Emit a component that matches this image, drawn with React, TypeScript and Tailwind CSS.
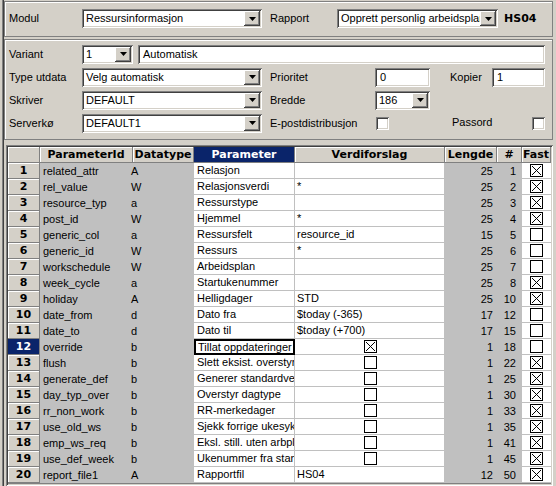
import React from "react";

const sunken =
  "shadow-[inset_1px_1px_0_#808080,inset_-1px_-1px_0_#ffffff,inset_2px_2px_0_#404040,inset_-2px_-2px_0_#d4d0c8]";
const raised =
  "shadow-[inset_-1px_-1px_0_#404040,inset_1px_1px_0_#ffffff,inset_-2px_-2px_0_#808080,inset_2px_2px_0_#d4d0c8]";

type Row = {
  n: number;
  id: string;
  type: string;
  param: string;
  value: string | boolean;
  len: number;
  pos: number;
  fast: boolean;
};

const rows: Row[] = [
  { n: 1, id: "related_attr", type: "A", param: "Relasjon", value: "", len: 25, pos: 1, fast: true },
  { n: 2, id: "rel_value", type: "W", param: "Relasjonsverdi", value: "*", len: 25, pos: 2, fast: true },
  { n: 3, id: "resource_typ", type: "a", param: "Ressurstype", value: "", len: 25, pos: 3, fast: true },
  { n: 4, id: "post_id", type: "W", param: "Hjemmel", value: "*", len: 25, pos: 4, fast: true },
  { n: 5, id: "generic_col", type: "a", param: "Ressursfelt", value: "resource_id", len: 15, pos: 5, fast: false },
  { n: 6, id: "generic_id", type: "W", param: "Ressurs", value: "*", len: 25, pos: 6, fast: false },
  { n: 7, id: "workschedule", type: "W", param: "Arbeidsplan", value: "", len: 25, pos: 7, fast: false },
  { n: 8, id: "week_cycle", type: "a", param: "Startukenummer", value: "", len: 25, pos: 8, fast: true },
  { n: 9, id: "holiday", type: "A", param: "Helligdager", value: "STD", len: 25, pos: 10, fast: true },
  { n: 10, id: "date_from", type: "d", param: "Dato fra", value: "$today (-365)", len: 17, pos: 12, fast: false },
  { n: 11, id: "date_to", type: "d", param: "Dato til", value: "$today (+700)", len: 17, pos: 15, fast: false },
  { n: 12, id: "override", type: "b", param: "Tillat oppdateringer", value: true, len: 1, pos: 18, fast: false },
  { n: 13, id: "flush", type: "b", param: "Slett eksist. overstyring", value: false, len: 1, pos: 22, fast: true },
  { n: 14, id: "generate_def", type: "b", param: "Generer standardverdier", value: false, len: 1, pos: 25, fast: true },
  { n: 15, id: "day_typ_over", type: "b", param: "Overstyr dagtype", value: false, len: 1, pos: 30, fast: true },
  { n: 16, id: "rr_non_work", type: "b", param: "RR-merkedager", value: false, len: 1, pos: 33, fast: true },
  { n: 17, id: "use_old_ws", type: "b", param: "Sjekk forrige ukesyklus", value: false, len: 1, pos: 35, fast: true },
  { n: 18, id: "emp_ws_req", type: "b", param: "Eksl. still. uten arbplan", value: false, len: 1, pos: 41, fast: true },
  { n: 19, id: "use_def_week", type: "b", param: "Ukenummer fra standard", value: false, len: 1, pos: 45, fast: true },
  { n: 20, id: "report_file1", type: "A", param: "Rapportfil", value: "HS04", len: 12, pos: 50, fast: true },
];

const Arrow = () => (
  <div className={`w-[16px] h-[15px] mr-[2px] bg-[#d4d0c8] flex items-center justify-center ${raised}`}>
    <svg width="7" height="4" viewBox="0 0 7 4">
      <polygon points="0,0 7,0 3.5,4" fill="#000" />
    </svg>
  </div>
);

const Combo = ({ w, value }: { w: string; value: string }) => (
  <div className={`${w} h-[19px] bg-white flex items-center ${sunken}`}>
    <span className="flex-1 pl-[4px] whitespace-nowrap overflow-hidden">{value}</span>
    <Arrow />
  </div>
);

const Input = ({ w, value }: { w: string; value: string }) => (
  <div className={`${w} h-[19px] bg-white flex items-center pl-[5px] ${sunken}`}>{value}</div>
);

const FormCheck = () => <div className={`w-[13px] h-[13px] bg-white ${sunken}`} />;

const GridCheck = ({ on }: { on: boolean }) => (
  <svg width="13" height="13" viewBox="0 0 13 13" className="block">
    <rect x="0.5" y="0.5" width="12" height="12" fill="#fff" stroke="#000" />
    {on && <path d="M2 2 L11 11 M11 2 L2 11" stroke="#000" strokeWidth="1" />}
  </svg>
);

const headCell =
  "h-[16px] flex items-center justify-center font-['DejaVu_Sans'] font-bold text-[11px] border-r border-b border-[#808080] shadow-[inset_1px_1px_0_#ffffff]";

export default function App() {
  return (
    <div className="w-[556px] h-[486px] overflow-hidden bg-[#d4d0c8] flex font-['Liberation_Sans'] text-[11px] text-black leading-none">
      <div className="w-[2px]" />
      <div className="w-[2px] border-l border-[#808080] border-r border-r-[#404040]" />
      <div className="flex-1 flex flex-col pr-[3px]">
        {/* Modul / Rapport */}
        <div className="h-[36px] mt-[1px] border border-[#808080] shadow-[inset_1px_1px_0_#ffffff] flex items-center pl-[4px]">
          <span className="w-[73px]">Modul</span>
          <Combo w="w-[180px]" value="Ressursinformasjon" />
          <span className="w-[67px] ml-[8px]">Rapport</span>
          <Combo w="w-[161px]" value="Opprett personlig arbeidsplan" />
          <span className="ml-[6px] font-['DejaVu_Sans'] font-bold">HS04</span>
        </div>

        {/* Variant panel */}
        <div className="h-[102px] mt-[2px] border border-[#808080] shadow-[inset_1px_1px_0_#ffffff] flex flex-col gap-[4px] pt-[5px] pl-[4px]">
          <div className="flex items-center">
            <span className="w-[73px]">Variant</span>
            <Combo w="w-[51px]" value="1" />
            <Input w="w-[407px] ml-[5px]" value="Automatisk" />
          </div>
          <div className="flex items-center">
            <span className="w-[73px]">Type utdata</span>
            <Combo w="w-[180px]" value="Velg automatisk" />
            <span className="w-[105px] ml-[8px]">Prioritet</span>
            <Input w="w-[55px]" value="0" />
            <span className="w-[42px] ml-[20px]">Kopier</span>
            <Input w="w-[53px]" value="1" />
          </div>
          <div className="flex items-center">
            <span className="w-[73px]">Skriver</span>
            <Combo w="w-[180px]" value="DEFAULT" />
            <span className="w-[105px] ml-[8px]">Bredde</span>
            <Combo w="w-[55px]" value="186" />
          </div>
          <div className="flex items-center">
            <span className="w-[73px]">Serverkø</span>
            <Combo w="w-[180px]" value="DEFAULT1" />
            <span className="w-[106px] ml-[8px]">E-postdistribusjon</span>
            <FormCheck />
            <span className="w-[80px] ml-[63px] -mt-[1px]">Passord</span>
            <FormCheck />
          </div>
        </div>

        {/* Grid */}
        <div className={`mt-[5px] ml-[2px] flex-1 p-[2px] ${sunken}`}>
          <div className="grid grid-cols-[32px_93px_61px_101px_150px_52px_25px_29px]">
            <div className={headCell} />
            <div className={headCell}>ParameterId</div>
            <div className={headCell}>Datatype</div>
            <div className="h-[16px] flex items-center justify-center font-['DejaVu_Sans'] font-bold text-[11px] bg-[#0a246a] text-white border-r border-b border-[#808080]">
              Parameter
            </div>
            <div className={headCell}>Verdiforslag</div>
            <div className={headCell}>Lengde</div>
            <div className={headCell}>#</div>
            <div className={headCell}>Fast</div>

            {rows.map((r) => {
              const sel = r.n === 12;
              return (
                <React.Fragment key={r.n}>
                  <div
                    className={
                      sel
                        ? "h-[16px] flex items-center justify-center font-['DejaVu_Sans'] font-bold bg-[#0a246a] text-white border-r border-b border-[#808080]"
                        : "h-[16px] flex items-center justify-center font-['DejaVu_Sans'] font-bold border-r border-b border-[#808080] shadow-[inset_1px_1px_0_#ffffff]"
                    }
                  >
                    {r.n}
                  </div>
                  <div className="h-[16px] bg-[#c0c0c0] flex items-center pl-[3px] whitespace-nowrap overflow-hidden">
                    {r.id}
                  </div>
                  <div className="h-[16px] bg-[#c0c0c0] flex items-center -ml-[2px] pl-0">{r.type}</div>
                  <div
                    className={
                      sel
                        ? "h-[16px] bg-white flex items-center pl-[2px] whitespace-nowrap overflow-hidden border-2 border-black"
                        : "h-[16px] bg-white flex items-center pl-[3px] whitespace-nowrap overflow-hidden border-r border-b border-[#c0c0c0]"
                    }
                  >
                    {r.param}
                  </div>
                  <div className="h-[16px] bg-white flex items-center pl-[2px] whitespace-nowrap overflow-hidden border-r border-b border-[#c0c0c0]">
                    {typeof r.value === "boolean" ? (
                      <div className="flex-1 flex justify-center">
                        <GridCheck on={r.value} />
                      </div>
                    ) : (
                      r.value
                    )}
                  </div>
                  <div className="h-[16px] bg-[#c0c0c0] flex items-center justify-end pr-[4px]">{r.len}</div>
                  <div className="h-[16px] bg-[#c0c0c0] flex items-center justify-end pr-[6px]">{r.pos}</div>
                  <div className="h-[16px] bg-white flex items-center justify-center border-b border-[#c0c0c0]">
                    <GridCheck on={r.fast} />
                  </div>
                </React.Fragment>
              );
            })}
          </div>
          <div className="h-px bg-[#808080]" />
        </div>
      </div>
    </div>
  );
}
